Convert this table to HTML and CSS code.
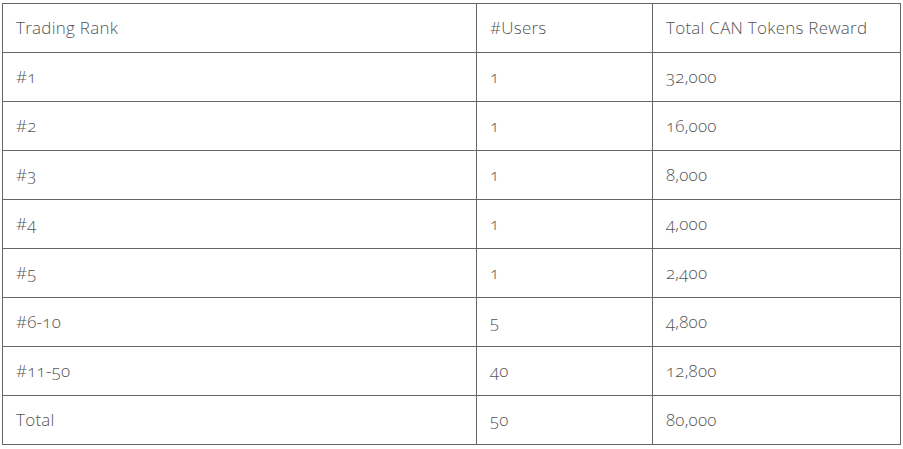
FILE: index.html
```html
<!DOCTYPE html>
<html>
<head>
<meta charset="utf-8">
<link rel="stylesheet" href="styles.css">
</head>
<body>
<table class="rewards">
  <colgroup><col class="c1"><col class="c2"><col class="c3"></colgroup>
  <tr><td>Trading Rank</td><td>#Users</td><td>Total CAN Tokens Reward</td></tr>
  <tr><td>#1</td><td>1</td><td>32,000</td></tr>
  <tr><td>#2</td><td>1</td><td>16,000</td></tr>
  <tr><td>#3</td><td>1</td><td>8,000</td></tr>
  <tr><td>#4</td><td>1</td><td>4,000</td></tr>
  <tr><td>#5</td><td>1</td><td>2,400</td></tr>
  <tr><td>#6-10</td><td>5</td><td>4,800</td></tr>
  <tr><td>#11-50</td><td>40</td><td>12,800</td></tr>
  <tr><td>Total</td><td>50</td><td>80,000</td></tr>
</table>
</body>
</html>
```
FILE: styles.css
```css
html, body { margin: 0; padding: 0; background: #fff; }
body { padding: 3px 0 0 2px; }
.rewards {
  border-collapse: collapse;
  table-layout: fixed;
  width: 898px;
  font-family: "Open Sans", Lato, sans-serif;
  font-size: 17px;
  letter-spacing: 0.25px;
  font-weight: 300;
  font-variant-numeric: oldstyle-nums;
  color: #555;
}
.c1 { width: 474px; }
.c2 { width: 176px; }
.c3 { width: 248px; }
.rewards td {
  border: 1px solid #666;
  padding: 0 0 1px 13px;
  box-sizing: border-box;
  height: 49px;
  vertical-align: middle;
}
```
